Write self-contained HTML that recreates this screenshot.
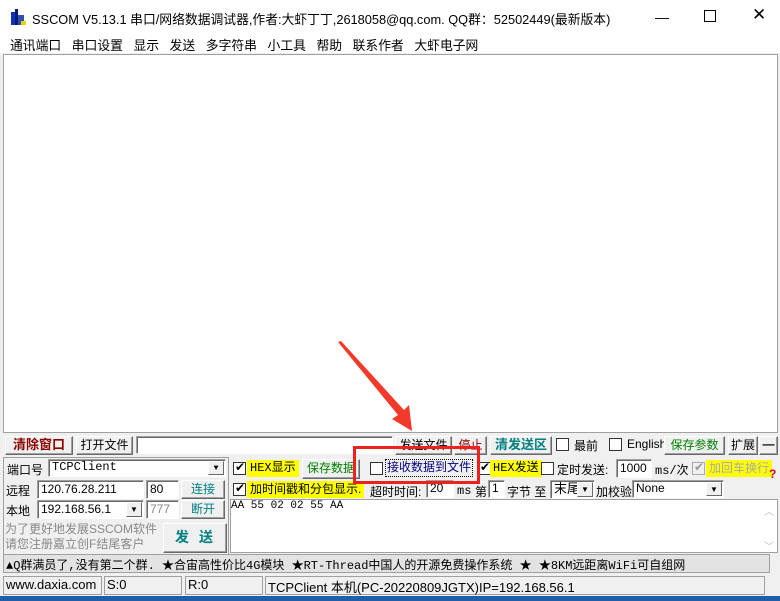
<!DOCTYPE html>
<html><head><meta charset="utf-8"><style>
*{box-sizing:border-box;margin:0;padding:0}
body{width:780px;height:601px;overflow:hidden;background:#f0f0f0;position:relative;font-family:"Liberation Sans","Noto Sans CJK SC",sans-serif;font-size:12px;color:#000}
.a{position:absolute;white-space:nowrap}
.btn{position:absolute;background:#f0f0f0;border:1px solid;border-color:#fff #696969 #696969 #fff;box-shadow:inset -1px -1px 0 #a0a0a0;text-align:center;font-size:12px}
.in{position:absolute;background:#fff;border:1px solid;border-color:#a0a0a0 #fff #fff #a0a0a0;box-shadow:inset 1px 1px 0 #696969;padding-left:3px;font-size:12px}
.cb{position:absolute;width:13px;height:13px;background:#fff;border:1px solid #333}
.cb.k::after{content:"✔";position:absolute;left:1px;top:-3px;font-size:12px}
.y{position:absolute;background:#ffff00;font-size:12px;padding:0 3px;line-height:17px}
.dd{position:absolute;right:1px;top:1px;bottom:1px;width:16px;background:#f0f0f0;border:1px solid;border-color:#fff #696969 #696969 #fff;font-size:8px;text-align:center;line-height:14px}
.mono{font-family:"Liberation Mono","Noto Sans CJK SC",monospace}
</style></head><body>
<div class="a" style="left:0;top:0;width:780px;height:33px;background:#fff"></div>
<svg class="a" style="left:11px;top:9px" width="16" height="16"><rect x="0" y="3" width="4" height="13" fill="#1030c0"/><rect x="4" y="0" width="3" height="16" fill="#0a1a70"/><rect x="7" y="6" width="6" height="10" fill="#3050b0"/><rect x="10" y="12" width="5" height="4" fill="#f0d000"/></svg>
<div class="a" style="left:32px;top:9px;font-size:12.8px">SSCOM V5.13.1 串口/网络数据调试器,作者:大虾丁丁,2618058@qq.com. QQ群：52502449(最新版本)</div>
<div class="a" style="left:655px;top:9px;font-size:14px">—</div>
<div class="a" style="left:704px;top:10px;width:12px;height:12px;border:1px solid #000"></div>
<div class="a" style="left:752px;top:5px;font-size:17px;font-weight:300">✕</div>
<div class="a" style="left:0;top:33px;width:780px;height:20px;background:#fff"></div>
<div class="a" style="left:10px;top:35px;font-size:12.8px;word-spacing:7px">通讯端口 串口设置 显示 发送 多字符串 小工具 帮助 联系作者 大虾电子网</div>
<div class="a" style="left:3px;top:54px;width:775px;height:379px;background:#fff;border:1px solid #a0a0a0"></div>

<!-- row1 -->
<div class="btn" style="left:5px;top:436px;width:68px;height:19px;color:#8b0000;font-weight:bold;line-height:16px;font-size:13px">清除窗口</div>
<div class="btn" style="left:76px;top:436px;width:57px;height:19px;line-height:16px">打开文件</div>
<div class="in" style="left:136px;top:436px;width:257px;height:18px"></div>
<div class="btn" style="left:395px;top:436px;width:57px;height:19px;line-height:16px">发送文件</div>
<div class="btn" style="left:454px;top:436px;width:33px;height:19px;line-height:16px;color:#8b0000">停止</div>
<div class="btn" style="left:490px;top:436px;width:62px;height:19px;line-height:16px;color:#008080;font-weight:bold;font-size:13px">清发送区</div>
<div class="cb" style="left:556px;top:438px"></div><div class="a" style="left:574px;top:437px">最前</div>
<div class="cb" style="left:609px;top:438px"></div><div class="a" style="left:627px;top:437px;font-size:12px">English</div>
<div class="btn" style="left:664px;top:436px;width:61px;height:19px;line-height:16px;color:#008000">保存参数</div>
<div class="btn" style="left:728px;top:436px;width:30px;height:19px;line-height:16px">扩展</div>
<div class="btn" style="left:759px;top:436px;width:19px;height:19px;line-height:15px;font-weight:bold">—</div>

<!-- left panel -->
<div class="a" style="left:3px;top:457px;width:226px;height:98px;border:1px solid #a0a0a0"></div>
<div class="a" style="left:7px;top:461px">端口号</div>
<div class="in mono" style="left:48px;top:459px;width:178px;height:18px;line-height:15px">TCPClient<div class="dd">▼</div></div>
<div class="a" style="left:6px;top:482px">远程</div>
<div class="in" style="left:37px;top:480px;width:107px;height:19px;line-height:16px">120.76.28.211</div>
<div class="in" style="left:146px;top:480px;width:33px;height:19px;line-height:16px">80</div>
<div class="btn" style="left:181px;top:480px;width:44px;height:19px;line-height:16px;color:#008080">连接</div>
<div class="a" style="left:6px;top:502px">本地</div>
<div class="in" style="left:37px;top:500px;width:107px;height:19px;line-height:16px">192.168.56.1<div class="dd">▼</div></div>
<div class="in" style="left:146px;top:500px;width:33px;height:19px;line-height:16px;color:#888">777</div>
<div class="btn" style="left:181px;top:500px;width:44px;height:19px;line-height:16px;color:#008080">断开</div>
<div class="a" style="left:5px;top:522px;font-size:12px;line-height:15px;color:#888">为了更好地发展SSCOM软件<br>请您注册嘉立创F结尾客户</div>
<div class="btn" style="left:163px;top:523px;width:64px;height:30px;line-height:27px;color:#008080;font-weight:bold;font-size:14px;letter-spacing:10px;padding-left:8px">发送</div>

<!-- right panel -->
<div class="cb k" style="left:233px;top:462px"></div>
<div class="y mono" style="left:247px;top:460px;height:17px">HEX显示</div>
<div class="btn" style="left:302px;top:459px;width:58px;height:20px;line-height:17px;color:#008000">保存数据</div>
<div class="cb" style="left:370px;top:462px"></div>
<div class="a" style="left:385px;top:459px;width:88px;height:18px;border:1px dotted #000;color:#000080;font-size:12px;line-height:15px;padding-left:1px">接收数据到文件</div>
<div class="cb k" style="left:478px;top:462px"></div>
<div class="y mono" style="left:490px;top:460px;height:17px">HEX发送</div>
<div class="cb" style="left:541px;top:462px"></div>
<div class="a" style="left:557px;top:461px">定时发送:</div>
<div class="in" style="left:616px;top:459px;width:36px;height:19px;line-height:16px">1000</div>
<div class="a mono" style="left:655px;top:461px;font-size:12px">ms/次</div>
<div class="cb k" style="left:692px;top:462px;border-color:#aaa;color:#999;background:#f0f0f0"></div>
<div class="y" style="left:706px;top:460px;height:17px;color:#aaa">加回车换行</div>
<div class="a" style="left:769px;top:467px;color:#d00;font-weight:bold;font-size:12px">?</div>

<div class="cb k" style="left:233px;top:483px"></div>
<div class="y" style="left:247px;top:481px;height:17px">加时间戳和分包显示.</div>
<div class="a" style="left:370px;top:483px">超时时间:</div>
<div class="in" style="left:426px;top:480px;width:28px;height:18px;line-height:15px">20</div>
<div class="a mono" style="left:457px;top:484px">ms</div>
<div class="a" style="left:475px;top:483px">第</div>
<div class="in" style="left:488px;top:480px;width:17px;height:18px;line-height:15px">1</div>
<div class="a" style="left:507px;top:483px">字节 至</div>
<div class="in" style="left:550px;top:480px;width:45px;height:19px;line-height:16px;font-size:13px">末尾<div class="dd">▼</div></div>
<div class="a" style="left:596px;top:483px">加校验</div>
<div class="in" style="left:632px;top:480px;width:92px;height:18px;line-height:15px">None<div class="dd">▼</div></div>

<div class="a" style="left:230px;top:499px;width:548px;height:54px;background:#fff;border:1px solid #a0a0a0"></div>
<div class="a mono" style="left:231px;top:500px;font-size:11px">AA 55 02 02 55 AA</div>
<div class="a" style="left:764px;top:503px;color:#bbb;font-size:10px">︿</div>
<div class="a" style="left:764px;top:538px;color:#bbb;font-size:10px">﹀</div>

<!-- marquee -->
<div class="a" style="left:3px;top:554px;width:767px;height:19px;background:#e3e3e3;border:1px solid #a0a0a0"></div>
<div class="a mono" style="left:6px;top:556px;font-size:12px">▲Q群满员了,没有第二个群. ★合宙高性价比4G模块 ★RT-Thread中国人的开源免费操作系统 ★ ★8KM远距离WiFi可自组网</div>

<!-- status -->
<div class="a" style="left:3px;top:576px;width:99px;height:19px;border:1px solid #a0a0a0;padding-left:2px;font-size:13px">www.daxia.com</div>
<div class="a" style="left:104px;top:576px;width:78px;height:19px;border:1px solid #a0a0a0;padding-left:2px;font-size:13px">S:0</div>
<div class="a" style="left:185px;top:576px;width:78px;height:19px;border:1px solid #a0a0a0;padding-left:2px;font-size:13px">R:0</div>
<div class="a" style="left:265px;top:576px;width:500px;height:19px;border:1px solid #a0a0a0;padding-left:2px;font-size:13px">TCPClient 本机(PC-20220809JGTX)IP=192.168.56.1</div>
<div class="a" style="left:0;top:596px;width:780px;height:5px;background:#1f5fa8"></div>

<!-- annotations -->
<div class="a" style="left:353px;top:446px;width:127px;height:38px;border:3px solid #ee2020"></div>
<svg class="a" style="left:0;top:0" width="780" height="601"><polygon points="338,342 341,341 404,410 409,405 412,431 392,419 398,415" fill="#f23a2a"/></svg>
</body></html>
